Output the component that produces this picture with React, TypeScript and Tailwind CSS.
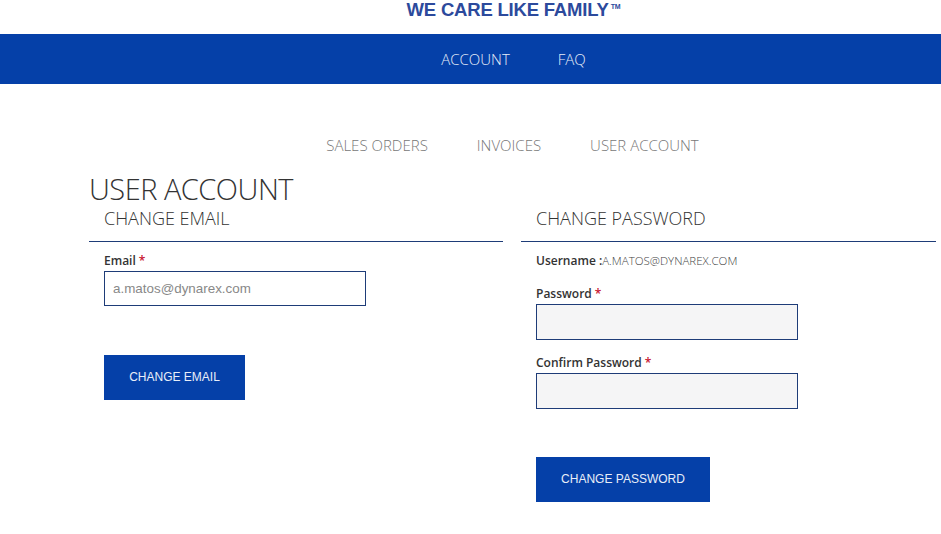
import React from 'react';

const Req = () => <span className="text-[#c8102e] ml-[3px]">*</span>;

export default function App() {
  return (
    <div className="min-h-[534px] bg-white font-['Open_Sans',sans-serif] text-[#333]">
      <div className="h-[34px] flex justify-center pl-[86px]">
        <div className="font-['Liberation_Sans',Arial,sans-serif] font-bold text-[18.5px] leading-[20px] text-[#2c4a9c] tracking-[-0.2px] flex items-start">
          WE CARE LIKE FAMILY
          <span className="text-[7px] leading-none ml-[2px] mt-[3px]">TM</span>
        </div>
      </div>

      <nav className="h-[50px] bg-[#0540a8] flex items-center justify-center gap-[48px] pl-[86px] text-[15px] text-[#e8eef8] font-light">
        <a>ACCOUNT</a>
        <a>FAQ</a>
      </nav>

      <div className="flex justify-center gap-[49px] mt-[50px] pl-[84px] text-[15px] font-light text-[#777]">
        <a>SALES ORDERS</a>
        <a>INVOICES</a>
        <a>USER ACCOUNT</a>
      </div>

      <div className="ml-[89px] w-[847px] mt-[14px]">
        <h1 className="text-[29px] font-light leading-[36px] text-[#333] tracking-[-0.5px]">USER ACCOUNT</h1>
        <div className="grid grid-cols-[414px_415px] gap-[18px]">
          <section>
            <h2 className="px-[15px] text-[18px] font-light leading-[22px] pb-[12px] border-b border-[#1e3c78]">CHANGE EMAIL</h2>
            <div className="px-[15px] pt-[11px]">
              <label className="block text-[12px] font-semibold leading-[16px] mb-[2px]">
                Email<Req />
              </label>
              <input
                placeholder="a.matos@dynarex.com"
                className="w-[262px] h-[35px] border border-[#1e3c78] px-[8px] text-[13.4px] font-['Liberation_Sans',Arial,sans-serif] placeholder:text-[#888] outline-none"
              />
              <button className="mt-[49px] block w-[141px] h-[45px] bg-[#0540a8] text-[#e8eef8] text-[12px] font-['Liberation_Sans',Arial,sans-serif]">
                CHANGE EMAIL
              </button>
            </div>
          </section>

          <section>
            <h2 className="px-[15px] text-[18px] font-light leading-[22px] pb-[12px] border-b border-[#1e3c78]">CHANGE PASSWORD</h2>
            <div className="px-[15px] pt-[11px] text-[12px]">
              <div className="leading-[16px]">
                <span className="font-semibold">Username :</span>
                <span className="font-light text-[#444] text-[11.5px]">A.MATOS@DYNAREX.COM</span>
              </div>
              <label className="block font-semibold leading-[16px] mt-[17px] mb-[2px]">
                Password<Req />
              </label>
              <input type="password" className="w-[262px] h-[36px] border border-[#1e3c78] bg-[#f5f5f6] outline-none" />
              <label className="block font-semibold leading-[16px] mt-[15px] mb-[2px]">
                Confirm Password<Req />
              </label>
              <input type="password" className="w-[262px] h-[36px] border border-[#1e3c78] bg-[#f5f5f6] outline-none" />
              <button className="mt-[48px] block w-[174px] h-[45px] bg-[#0540a8] text-[#e8eef8] text-[12px] font-['Liberation_Sans',Arial,sans-serif]">
                CHANGE PASSWORD
              </button>
            </div>
          </section>
        </div>
      </div>
    </div>
  );
}
